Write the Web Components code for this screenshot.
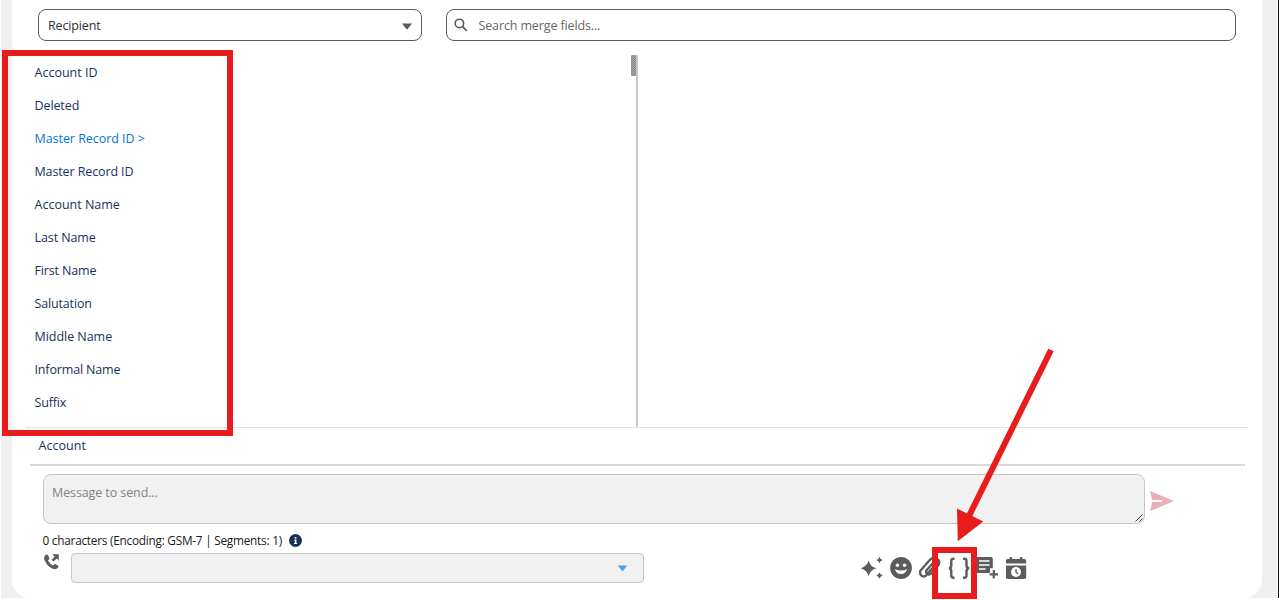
<!DOCTYPE html>
<html lang="en">
<head>
<meta charset="utf-8">
<title>Merge fields</title>
<style>
    body {
        margin: 0;
        width: 1279px;
        height: 600px;
        overflow: hidden;
        background: #fff;
        font-family: "Open Sans", "Noto Sans", sans-serif;
        font-size: 12.5px;
    }
</style>
</head>
<body>
<message-composer></message-composer>

<script>
class SelectBox extends HTMLElement {
    constructor() {
        super();
        this.attachShadow({mode: 'open'}).innerHTML = `
            <style>
                :host {
                    box-sizing: border-box;
                    display: flex;
                    align-items: center;
                    justify-content: space-between;
                    width: 384px;
                    height: 32px;
                    padding: 0 9px;
                    border: 1px solid #5c5c5c;
                    border-radius: 8px;
                    color: #2e2e2e;
                    letter-spacing: -0.15px;
                }
                :host([soft]) {
                    width: 573px;
                    height: 30px;
                    padding: 0 15px;
                    border-color: #bcc6d4;
                    border-radius: 4px;
                    background: #f1f1f1;
                }
                svg { display: block; margin-top: 2px; }
                .small { display: none; }
                :host([soft]) .small { display: block; margin-top: 1px; }
                :host([soft]) .big { display: none; }
            </style>
            <span><slot></slot></span>
            <svg class="big" width="10" height="7"><path d="M0 0.5H10L5.6 6Q5 6.7 4.4 6Z" fill="#5c5c5c"/></svg>
            <svg class="small" width="11" height="7"><path d="M0.8 0.5H10.2L5.5 6.5Z" fill="#4f9fe8"/></svg>
        `;
    }
}

class SearchBox extends HTMLElement {
    constructor() {
        super();
        this.attachShadow({mode: 'open'}).innerHTML = `
            <style>
                :host {
                    box-sizing: border-box;
                    display: flex;
                    align-items: center;
                    gap: 10.5px;
                    width: 790px;
                    height: 32px;
                    padding-left: 7px;
                    border: 1px solid #5c5c5c;
                    border-radius: 8px;
                    color: #666;
                    letter-spacing: -0.13px;
                }
            </style>
            <svg width="14" height="14" viewBox="0 0 14 14" fill="none" stroke="#5c5c5c">
                <circle cx="5.4" cy="5.4" r="4.2" stroke-width="1.6"/>
                <path d="M8.6 8.6L12.3 12.3" stroke-width="1.8" stroke-linecap="round"/>
            </svg>
            <span><slot></slot></span>
        `;
    }
}

class FieldList extends HTMLElement {
    constructor() {
        super();
        this._shadowRoot = this.attachShadow({mode: 'open'});
    }

    set fields(fields) {
        this._fields = fields;
        this.render();
    }

    render() {
        this._shadowRoot.innerHTML = `
            <style>
                :host {
                    box-sizing: border-box;
                    display: flex;
                    justify-content: space-between;
                    width: 612px;
                    height: 372px;
                    border-right: 2px solid #c6c6c6;
                    color: #16325c;
                }
                ul {
                    margin: 0;
                    padding: 1px 0 0 8.5px;
                    list-style: none;
                }
                li {
                    height: 33px;
                    line-height: 33px;
                    white-space: pre;
                }
                .parent { color: #0b75d8; }
                .thumb {
                    width: 5px;
                    height: 21px;
                    border-radius: 1px;
                    background: repeating-conic-gradient(#858585 0 25%, #a8a8a8 0 50%) 0 0 / 2px 2px;
                }
            </style>
            <ul></ul>
            <div class="thumb"></div>
        `;
        const list = this._shadowRoot.querySelector('ul');
        this._fields.forEach(field => {
            const item = document.createElement('li');
            item.textContent = field.name;
            item.style.letterSpacing = field.spacing || '0px';
            if (field.parent) item.className = 'parent';
            list.appendChild(item);
        });
    }
}

class MessageBox extends HTMLElement {
    constructor() {
        super();
        this.attachShadow({mode: 'open'}).innerHTML = `
            <style>
                :host { display: flex; gap: 5px; }
                .area {
                    box-sizing: border-box;
                    display: flex;
                    justify-content: space-between;
                    width: 1102px;
                    height: 50px;
                    padding: 9px 1px 1px 8px;
                    border: 1px solid #c6c6c6;
                    border-radius: 8px;
                    background: #f1f1f1;
                    color: #838383;
                    line-height: 17px;
                    letter-spacing: -0.1px;
                }
                .grip { align-self: flex-end; }
                .send { margin-top: 17px; }
            </style>
            <div class="area">
                <slot></slot>
                <svg class="grip" width="8" height="8" stroke="#444" stroke-width="1"><path d="M0.5 7.5L7.5 0.5M4.5 7.5L7.5 4.5"/></svg>
            </div>
            <svg class="send" width="24" height="21" fill="#eaafb4"><path d="M0 0L24 9.9L0.2 20.1L2.2 11H11.5Q12.3 11 12.3 9.9Q12.3 9 11.5 9H2.2Z"/></svg>
        `;
    }
}

class ActionBar extends HTMLElement {
    constructor() {
        super();
        this.attachShadow({mode: 'open'}).innerHTML = `
            <style>
                :host { display: flex; align-items: center; height: 24px; }
                svg { display: block; fill: #5c5c5c; }
            </style>
            <svg width="25" height="24" viewBox="861.4 556 25 24">
                <path d="M869 560.5Q870.5 566.8 877 568.3Q870.5 569.8 869 576.3Q867.4 569.8 861 568.3Q867.4 566.8 869 560.5Z"/>
                <path d="M879.9 556.7Q880.6 559.3 883.1 560Q880.6 560.7 879.9 563.3Q879.2 560.7 876.7 560Q879.2 559.3 879.9 556.7ZM879.9 572.2Q880.6 574.8 883.1 575.5Q880.6 576.2 879.9 578.8Q879.2 576.2 876.7 575.5Q879.2 574.8 879.9 572.2Z"/>
            </svg>
            <svg style="margin-left:4px" width="22" height="24" viewBox="0 0 22 24">
                <circle cx="11" cy="12" r="10.9"/>
                <circle cx="7.4" cy="9.2" r="1.7" fill="#fff"/><circle cx="14.6" cy="9.2" r="1.7" fill="#fff"/>
                <path d="M5 13.2Q11 15.6 17 13.2Q16 18 11 18Q6 18 5 13.2Z" fill="#fff"/>
            </svg>
            <svg style="margin-left:7px" width="22" height="24" viewBox="919.5 556 22 24">
                <path d="M937.2 563.2L927.6 574.3Q925.2 577.8 922.3 575.8Q919.2 573 921.3 570.2L930.7 559.5Q933.6 556.5 937 558.3Q941.5 561.5 938.8 565.3L931.3 573.7Q928.8 575.3 927.3 573.6Q925.8 571.9 927.3 570L933.2 563.2" fill="none" stroke="#5c5c5c" stroke-width="2.3" stroke-linecap="round" stroke-linejoin="round"/>
            </svg>
            <svg style="margin-left:7px" width="23" height="24" viewBox="948.3 556 23 24">
                <path d="M954.8 558.8H953.8Q951.6 558.8 951.6 561V565.2Q951.6 568 949.2 568.2Q951.6 568.5 951.6 571.2V575.5Q951.6 577.7 953.8 577.7H954.8M963.4 558.8H964.6Q966.8 558.8 966.8 561V565.2Q966.8 568 969.4 568.2Q966.8 568.5 966.8 571.2V575.5Q966.8 577.7 964.6 577.7H963.4" fill="none" stroke="#5c5c5c" stroke-width="2.4"/>
            </svg>
            <svg style="margin-left:5px" width="23" height="24" viewBox="976 556 23 24">
                <path d="M976 557H990.8Q992.8 557 992.8 559V568.3H990V573H976Z"/>
                <path d="M979 561H989.5M979 565H989.5M979 569H985.5" stroke="#fff" stroke-width="1.4"/>
                <path d="M993.8 570V578.5M989.6 574.3H998" stroke="#5c5c5c" stroke-width="2.2"/>
            </svg>
            <svg style="margin-left:7px" width="21" height="24" viewBox="0.5 0 21 24">
                <path d="M0.3 8V5Q0.3 3 2.3 3H4V2Q4 1 5.3 1Q6.6 1 6.6 2V3H14.4V2Q14.4 1 15.7 1Q17 1 17 2V3H18.7Q20.7 3 20.7 5V7.5H0.3ZM0.3 9.4H20.7V21Q20.7 23 18.7 23H2.3Q0.3 23 0.3 21Z"/>
                <circle cx="10.5" cy="16" r="5" fill="#fff"/>
                <path d="M10.5 13V16.2L12.6 17.9" fill="none" stroke="#5c5c5c" stroke-width="1.3"/>
            </svg>
        `;
    }
}

class MessageComposer extends HTMLElement {
    constructor() {
        super();
        this._shadowRoot = this.attachShadow({mode: 'open'});
        this._shadowRoot.innerHTML = `
            <style>
                :host {
                    box-sizing: border-box;
                    display: block;
                    position: relative;
                    width: 1279px;
                    height: 598px;
                    padding: 0 16px 0 11px;
                    border-left: 1px solid #fff;
                    border-right: 1px solid #1c1c1c;
                    background: #f0f0f0;
                }
                .card {
                    box-sizing: border-box;
                    display: flex;
                    flex-direction: column;
                    height: 598px;
                    padding-top: 9px;
                    border-radius: 0 0 18px 18px;
                    background: #fff;
                }
                .filters { display: flex; gap: 24px; margin-left: 26px; }
                .panes {
                    display: flex;
                    margin: 14px 14px 0;
                    border-bottom: 1px solid #e2e2e2;
                }
                .object {
                    height: 36px;
                    line-height: 36px;
                    margin: 0 17px 0 18px;
                    padding-left: 8.5px;
                    border-bottom: 2px solid #dadada;
                    color: #16325c;
                    letter-spacing: 0.04px;
                }
                message-box { margin: 8px 0 0 31px; }
                .count {
                    display: flex;
                    align-items: center;
                    gap: 7.5px;
                    height: 18px;
                    margin: 7px 0 0 30.5px;
                    font-size: 11.8px;
                    color: #181818;
                    letter-spacing: -0.24px;
                }
                .sender { display: flex; margin: 4px 0 0 31px; }
                .sender select-box { margin-left: 12px; }
                .sender action-bar { margin: 3px 0 0 217px; }
                .phone { display: block; margin: 1px 0 0 1px; }
                .mark { position: absolute; box-sizing: border-box; border: 6px solid #e81c1c; }
                .list-mark { left: 1px; top: 50px; width: 231px; height: 386px; }
                .merge-mark { left: 931px; top: 547px; width: 45px; height: 52px; }
                .arrow { position: absolute; left: 948px; top: 340px; }
            </style>
            <div class="card">
                <div class="filters">
                    <select-box>Recipient</select-box>
                    <search-box>Search merge fields...</search-box>
                </div>
                <div class="panes"><field-list></field-list></div>
                <div class="object">Account</div>
                <message-box>Message to send...</message-box>
                <div class="count">
                    <span>0 characters (Encoding: GSM-7 | Segments: 1)</span>
                    <svg width="13" height="13"><circle cx="6.5" cy="6.5" r="6.5" fill="#16325c"/><path d="M5.7 3H7.4V4.5H5.7ZM5.1 5.5H7.4V9H8.2V10H5V9H5.8V6.4H5.1Z" fill="#fff"/></svg>
                </div>
                <div class="sender">
                    <svg class="phone" width="15" height="16" fill="#5c5c5c">
                        <path d="M1.3 1.3Q3 -0.2 4.2 1.4L5.3 4Q5.6 5 4.4 5.7Q3.8 6.2 4.3 7Q6 10 8.5 11.2Q9.3 11.6 9.8 10.8Q10.5 9.7 11.5 10.1L13.8 11.5Q15.2 12.5 13.7 14.1Q11.5 16.2 8 14.4Q2.3 11.3 0.3 5.4Q-0.3 2.5 1.3 1.3Z"/>
                        <path d="M8.2 0.2H14.8V6.4L12.8 4.5L9.6 7.6L7.6 5.7L10.7 2.5Z"/>
                    </svg>
                    <select-box soft></select-box>
                    <action-bar></action-bar>
                </div>
            </div>
            <div class="mark list-mark"></div>
            <div class="mark merge-mark"></div>
            <svg class="arrow" width="110" height="205">
                <path d="M102 10L19 178" stroke="#e81c1c" stroke-width="6"/>
                <path d="M8 168.5L34.3 181.5L8.8 201.3Z" fill="#e81c1c"/>
            </svg>
        `;
    }

    connectedCallback() {
        this._shadowRoot.querySelector('field-list').fields = [
            {name: 'Account ID'},
            {name: 'Deleted', spacing: '-0.1px'},
            {name: 'Master Record ID >', parent: true, spacing: '-0.05px'},
            {name: 'Master Record ID', spacing: '-0.12px'},
            {name: 'Account Name'},
            {name: 'Last Name', spacing: '-0.1px'},
            {name: 'First Name', spacing: '-0.15px'},
            {name: 'Salutation', spacing: '-0.15px'},
            {name: 'Middle Name', spacing: '-0.04px'},
            {name: 'Informal Name', spacing: '-0.15px'},
            {name: 'Suffix', spacing: '-0.15px'}
        ];
    }
}

customElements.define('select-box', SelectBox);
customElements.define('search-box', SearchBox);
customElements.define('field-list', FieldList);
customElements.define('message-box', MessageBox);
customElements.define('action-bar', ActionBar);
customElements.define('message-composer', MessageComposer);
</script>
</body>
</html>
